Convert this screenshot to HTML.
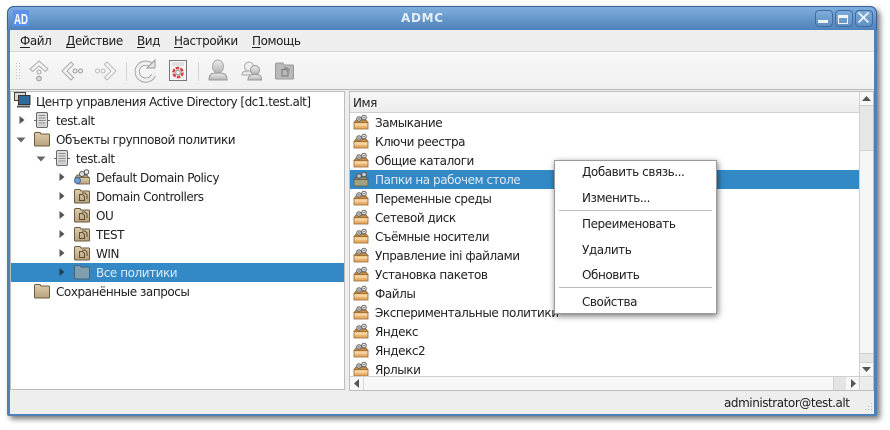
<!DOCTYPE html>
<html><head><meta charset="utf-8">
<style>
html,body{margin:0;padding:0;width:890px;height:430px;overflow:hidden;background:#fff}
body{position:relative;font-family:"DejaVu Sans","Liberation Sans",sans-serif;font-size:12px;color:#202020}
.a{position:absolute}
.t{position:absolute;white-space:nowrap;line-height:16px;height:16px;letter-spacing:-.45px;margin-top:1px}
.w{color:#dfeaf5}
u{text-underline-offset:2px}
svg{position:absolute;overflow:visible}
</style></head><body>
<svg width="0" height="0" style="position:absolute">
<defs>
<linearGradient id="tanG" x1="0" y1="0" x2="0" y2="1"><stop offset="0" stop-color="#dccdae"/><stop offset="1" stop-color="#b8a27c"/></linearGradient>
<linearGradient id="boxG" x1="0" y1="0" x2="0" y2="1"><stop offset="0" stop-color="#f6cf94"/><stop offset="1" stop-color="#e2a25a"/></linearGradient>
<linearGradient id="gr" x1="0" y1="0" x2="0" y2="1"><stop offset="0" stop-color="#ececec"/><stop offset="1" stop-color="#b4b4b4"/></linearGradient>
<symbol id="folder" viewBox="0 0 16 16"><path d="M.5 3.500V14a1 1 0 0 0 1 1h13a1 1 0 0 0 1-1V4a1 1 0 0 0-1-1H7L6 1.500H2A1.500 1.500 0 0 0 .5 3.500z" fill="url(#tanG)" stroke="#6b5a3c"/></symbol>
<symbol id="gfolder" viewBox="0 0 16 16"><path d="M.5 3.500V14a1 1 0 0 0 1 1h13a1 1 0 0 0 1-1V4a1 1 0 0 0-1-1H7L6 1.500H2A1.500 1.500 0 0 0 .5 3.500z" fill="url(#tanG)" stroke="#6b5a3c"/><path d="M5.500 6.500h3l2 2v4h-5zM8 5h3l2 2v4" fill="none" stroke="#5b4c34"/></symbol>
<symbol id="box" viewBox="0 0 16 16"><path d="M1 8.500 3 6h10l2 2.500z" fill="#c98d45" stroke="#8a5f2b" stroke-width=".8"/><rect x="1" y="8.500" width="14" height="6.500" fill="url(#boxG)" stroke="#9a6a30" stroke-width=".8"/><path d="M1.500 11h13" stroke="#fbe3bb"/><circle cx="6" cy="5" r="2.300" fill="#d4d4d4" stroke="#666"/><circle cx="11" cy="3.500" r="2.300" fill="#eee" stroke="#666"/><circle cx="6" cy="5" r=".8" fill="#666"/><circle cx="11" cy="3.500" r=".8" fill="#666"/></symbol>
<symbol id="server" viewBox="0 0 16 16"><path d="M0 8.500h3M13 8.500h3" stroke="#666"/><rect x="2.500" y=".5" width="11" height="15" rx="1.500" fill="#dedede" stroke="#666"/><path d="M4.500 3.500h7M4.500 6h7M4.500 8.500h7M4.500 11h7" stroke="#8a8a8a"/><path d="M4.500 13.300h7" stroke="#999" stroke-dasharray="1 1"/></symbol>
<symbol id="policy" viewBox="0 0 16 16"><path d="M1 9 3 6h10l2 3z" fill="#b9a27b" stroke="#66583e" stroke-width=".8"/><rect x="3" y="8.500" width="12.500" height="6.500" fill="url(#tanG)" stroke="#66583e" stroke-width=".8"/><circle cx="8" cy="5" r="2.500" fill="#ddd" stroke="#555"/><circle cx="12.500" cy="3" r="2.300" fill="#eee" stroke="#555"/><circle cx="3.500" cy="11.500" r="3" fill="#6f9fd0" stroke="#3f6b9e"/></symbol>
<symbol id="arrowR" viewBox="0 0 6 10"><path d="M.5 1 5.500 5 .5 9z" fill="#555"/></symbol>
<symbol id="arrowD" viewBox="0 0 10 8"><path d="M.5 1.500h9L5 6.500z" fill="#666"/></symbol>
</defs>
</svg>

<!-- shadow + frame -->
<div class="a" style="left:7px;top:6px;width:870px;height:410px;border-radius:7px 7px 2px 2px;box-shadow:3px 3px 6px rgba(0,0,0,.55);background:#4f80b8"></div>
<div class="a" style="left:7px;top:6px;width:870px;height:24px;border-radius:7px 7px 0 0;box-sizing:border-box;border:1px solid #3a639a;border-bottom:0;background:linear-gradient(#7eaedd,#4f82ba)"></div>
<div class="a" style="left:10px;top:30px;width:864px;height:384px;background:#eeeeee"></div>

<!-- title -->
<svg style="left:13px;top:10px" width="16" height="16"><rect width="16" height="16" fill="#5f90ec"/><text x="1" y="14" font-family="Liberation Sans" font-weight="bold" font-size="15" fill="#fff" textLength="14" lengthAdjust="spacingAndGlyphs">AD</text></svg>
<div class="t" style="left:401px;top:9px;font-weight:bold;color:#e6edf5;letter-spacing:.7px;font-size:12px">ADMC</div>
<div class="a" style="left:815px;top:10px;width:16px;height:15px;border:1px solid #3f6ca3;border-radius:4px;background:rgba(255,255,255,.06)"></div>
<div class="a" style="left:835px;top:10px;width:16px;height:15px;border:1px solid #3f6ca3;border-radius:4px;background:rgba(255,255,255,.06)"></div>
<div class="a" style="left:855px;top:10px;width:16px;height:15px;border:1px solid #3f6ca3;border-radius:4px;background:rgba(255,255,255,.06)"></div>
<div class="a" style="left:818px;top:20px;width:10px;height:3px;background:#f2f6fa"></div>
<div class="a" style="left:838px;top:15px;width:8px;height:5px;border:1px solid #f2f6fa;border-top:3px solid #f2f6fa"></div>
<svg style="left:858px;top:12px" width="11" height="11"><path d="M.5.5l10 10M10.500.5l-10 10" stroke="#eef3f8" stroke-width="1.800"/></svg>

<!-- menu -->
<div class="t" style="left:20px;top:32px"><u>Ф</u>айл</div>
<div class="t" style="left:66px;top:32px"><u>Д</u>ействие</div>
<div class="t" style="left:137px;top:32px"><u>В</u>ид</div>
<div class="t" style="left:174px;top:32px"><u>Н</u>астройки</div>
<div class="t" style="left:252px;top:32px"><u>П</u>омощь</div>
<div class="a" style="left:10px;top:51px;width:864px;height:1px;background:#d6d6d6"></div>

<!-- toolbar -->
<div class="a" style="left:10px;top:52px;width:864px;height:37px;background:linear-gradient(#f8f8f8,#f0f0f0)"></div>
<div class="a" style="left:10px;top:89px;width:864px;height:1px;background:#b8b8b8"></div>
<svg style="left:16px;top:63px" width="4" height="18"><path d="M.5 0v18M3.500 0v18" stroke="#c4c4c4" stroke-dasharray="1 2"/></svg>
<div class="a" style="left:126px;top:62px;width:1px;height:19px;background:#d4d4d4"></div>
<div class="a" style="left:198px;top:62px;width:1px;height:19px;background:#d4d4d4"></div>
<svg style="left:29px;top:60px" width="20" height="22"><path d="M10 1 19 9l-2.500 2.500L10 6 3.500 11.500 1 9z" fill="#f2f2f2" stroke="#aaa"/><circle cx="10" cy="12" r="2" fill="#eee" stroke="#aaa"/><circle cx="10" cy="18.500" r="2.300" fill="#ddd" stroke="#999"/></svg>
<svg style="left:61px;top:61px" width="22" height="20"><path d="M10 1 1 10l9 9 2.500-2.500L6 10l6.500-6.500z" fill="#f2f2f2" stroke="#aaa"/><circle cx="14" cy="10" r="2" fill="#eee" stroke="#999"/><circle cx="19.500" cy="10" r="2" fill="#eee" stroke="#999"/></svg>
<svg style="left:95px;top:61px" width="22" height="20"><path d="M12 1l9 9-9 9-2.500-2.500L16 10 9.500 3.500z" fill="#f6f6f6" stroke="#bbb"/><circle cx="8" cy="10" r="2" fill="#f4f4f4" stroke="#bbb"/><circle cx="2.500" cy="10" r="2" fill="#f4f4f4" stroke="#bbb"/></svg>
<svg style="left:135px;top:60px" width="21" height="22"><path d="M17 6A8.500 8.500 0 1 0 18.500 15" fill="none" stroke="#999" stroke-width="5"/><path d="M17 6A8.500 8.500 0 1 0 18.500 15" fill="none" stroke="#f0f0f0" stroke-width="3.400"/><path d="M12 8h8V0z" fill="#e4e4e4" stroke="#999"/></svg>
<svg style="left:169px;top:60px" width="18" height="21"><rect x=".5" y=".5" width="17" height="20" fill="#f4f4f4" stroke="#777"/><path d="M3 3h12M3 5h12" stroke="#ccc"/><circle cx="9" cy="12.500" r="4.500" fill="#fff" stroke="#d24545" stroke-width="2.600" stroke-dasharray="3.500 1.200"/><circle cx="9" cy="12.500" r="2.200" fill="none" stroke="#888"/></svg>
<svg style="left:208px;top:59px" width="20" height="22"><ellipse cx="10" cy="7.500" rx="5.500" ry="6.500" fill="url(#gr)" stroke="#aaa"/><path d="M1 21c0-7 4-7 9-7s9 0 9 7z" fill="url(#gr)" stroke="#999"/></svg>
<svg style="left:241px;top:61px" width="21" height="20"><circle cx="8" cy="5.500" r="4.500" fill="#eee" stroke="#aaa"/><path d="M1 14c0-4 3-4 7-4s5 1 5 4z" fill="#e8e8e8" stroke="#aaa"/><circle cx="14" cy="9" r="4.500" fill="url(#gr)" stroke="#999"/><path d="M7 19c0-5 3-5.500 7-5.500s6.500.5 6.500 5.500z" fill="url(#gr)" stroke="#999"/></svg>
<svg style="left:275px;top:62px" width="19" height="18"><path d="M.5 3v13a1 1 0 0 0 1 1h16a1 1 0 0 0 1-1V4a1 1 0 0 0-1-1H9L8 1H2A1.500 1.500 0 0 0 .5 3z" fill="#b9b9b9" stroke="#999"/><path d="M7 7.500h4l2 2V14H7zM9 6h3l2.500 2.500" fill="none" stroke="#777"/></svg>

<!-- left panel -->
<div class="a" style="left:10px;top:91px;width:335px;height:299px;background:#fff;box-sizing:border-box;border:1px solid #bdbdbd"></div>
<div class="a" style="left:11px;top:263px;width:333px;height:19px;background:#3289c6"></div>

<svg style="left:14px;top:92px" width="17" height="17" viewBox="0 0 17 17"><rect x=".5" y=".5" width="11" height="8" fill="#d8d8d8" stroke="#444"/><rect x="4.500" y="3.500" width="11.500" height="9" fill="#2f6c9c" stroke="#333"/><path d="M3 14.500h13" stroke="#555" stroke-width="2"/></svg>
<div class="t" style="left:36px;top:93px;letter-spacing:-.51px">Центр управления Active Directory [dc1.test.alt]</div>

<svg style="left:19px;top:115px" width="6" height="10"><use href="#arrowR"/></svg>
<svg style="left:34px;top:112px" width="16" height="16"><use href="#server"/></svg>
<div class="t" style="left:56px;top:112px">test.alt</div>

<svg style="left:16px;top:136px" width="10" height="8"><use href="#arrowD"/></svg>
<svg style="left:34px;top:131px" width="16" height="16"><use href="#folder"/></svg>
<div class="t" style="left:56px;top:131px">Объекты групповой политики</div>

<svg style="left:36px;top:155px" width="10" height="8"><use href="#arrowD"/></svg>
<svg style="left:54px;top:150px" width="16" height="16"><use href="#server"/></svg>
<div class="t" style="left:76px;top:150px">test.alt</div>

<svg style="left:59px;top:172px" width="6" height="10"><use href="#arrowR"/></svg>
<svg style="left:74px;top:169px" width="16" height="16"><use href="#policy"/></svg>
<div class="t" style="left:96px;top:169px">Default Domain Policy</div>

<svg style="left:59px;top:191px" width="6" height="10"><use href="#arrowR"/></svg>
<svg style="left:74px;top:188px" width="16" height="16"><use href="#gfolder"/></svg>
<div class="t" style="left:96px;top:188px">Domain Controllers</div>

<svg style="left:59px;top:210px" width="6" height="10"><use href="#arrowR"/></svg>
<svg style="left:74px;top:207px" width="16" height="16"><use href="#gfolder"/></svg>
<div class="t" style="left:96px;top:207px">OU</div>

<svg style="left:59px;top:229px" width="6" height="10"><use href="#arrowR"/></svg>
<svg style="left:74px;top:226px" width="16" height="16"><use href="#gfolder"/></svg>
<div class="t" style="left:96px;top:226px">TEST</div>

<svg style="left:59px;top:248px" width="6" height="10"><use href="#arrowR"/></svg>
<svg style="left:74px;top:245px" width="16" height="16"><use href="#gfolder"/></svg>
<div class="t" style="left:96px;top:245px">WIN</div>

<svg style="left:59px;top:267px" width="6" height="10"><path d="M.5 1l5 4-5 4z" fill="#1d3f5c"/></svg>
<svg style="left:74px;top:264px" width="16" height="16" viewBox="0 0 16 16"><path d="M.5 3.500V14a1 1 0 0 0 1 1h13a1 1 0 0 0 1-1V4a1 1 0 0 0-1-1H7L6 1.500H2A1.500 1.500 0 0 0 .5 3.500z" fill="#7f9eae" stroke="#4a6473"/></svg>
<div class="t w" style="left:96px;top:264px">Все политики</div>

<svg style="left:34px;top:283px" width="16" height="16"><use href="#folder"/></svg>
<div class="t" style="left:56px;top:283px">Сохранённые запросы</div>

<!-- right panel -->
<div class="a" style="left:349px;top:91px;width:525px;height:300px;background:#fff;box-sizing:border-box;border:1px solid #bdbdbd"></div>
<div class="a" style="left:350px;top:92px;width:509px;height:20px;background:linear-gradient(#f7f7f7,#ececec);border-bottom:1px solid #d0d0d0"></div>
<div class="t" style="left:353px;top:94px">Имя</div>
<div class="a" style="left:350px;top:170px;width:510px;height:19px;background:#3289c6"></div>

<svg style="left:353px;top:114px" width="16" height="16"><use href="#box"/></svg><div class="t" style="left:375px;top:114px">Замыкание</div>
<svg style="left:353px;top:133px" width="16" height="16"><use href="#box"/></svg><div class="t" style="left:375px;top:133px">Ключи реестра</div>
<svg style="left:353px;top:152px" width="16" height="16"><use href="#box"/></svg><div class="t" style="left:375px;top:152px">Общие каталоги</div>
<svg style="left:353px;top:171px" width="16" height="16" viewBox="0 0 16 16"><path d="M1 8.500 3 6h10l2 2.500z" fill="#8b8b6f" stroke="#555" stroke-width=".8"/><rect x="1" y="8.500" width="14" height="6.500" fill="#a3a27d" stroke="#5e5e48" stroke-width=".8"/><circle cx="6" cy="5" r="2.300" fill="#b8c4cc" stroke="#555"/><circle cx="11" cy="3.500" r="2.300" fill="#c8d2d8" stroke="#555"/></svg>
<div class="t w" style="left:375px;top:171px">Папки на рабочем столе</div>
<svg style="left:353px;top:190px" width="16" height="16"><use href="#box"/></svg><div class="t" style="left:375px;top:190px">Переменные среды</div>
<svg style="left:353px;top:209px" width="16" height="16"><use href="#box"/></svg><div class="t" style="left:375px;top:209px">Сетевой диск</div>
<svg style="left:353px;top:228px" width="16" height="16"><use href="#box"/></svg><div class="t" style="left:375px;top:228px">Съёмные носители</div>
<svg style="left:353px;top:247px" width="16" height="16"><use href="#box"/></svg><div class="t" style="left:375px;top:247px">Управление ini файлами</div>
<svg style="left:353px;top:266px" width="16" height="16"><use href="#box"/></svg><div class="t" style="left:375px;top:266px">Установка пакетов</div>
<svg style="left:353px;top:285px" width="16" height="16"><use href="#box"/></svg><div class="t" style="left:375px;top:285px">Файлы</div>
<svg style="left:353px;top:304px" width="16" height="16"><use href="#box"/></svg><div class="t" style="left:375px;top:304px">Экспериментальные политики</div>
<svg style="left:353px;top:323px" width="16" height="16"><use href="#box"/></svg><div class="t" style="left:375px;top:323px">Яндекс</div>
<svg style="left:353px;top:342px" width="16" height="16"><use href="#box"/></svg><div class="t" style="left:375px;top:342px">Яндекс2</div>
<div class="a" style="left:353px;top:361px;width:16px;height:15px;overflow:hidden"><svg style="left:0;top:0" width="16" height="16"><use href="#box"/></svg></div><div class="t" style="left:375px;top:361px;height:14px;overflow:hidden">Ярлыки</div>

<!-- v scrollbar -->
<div class="a" style="left:859px;top:92px;width:14px;height:284px;background:#e6e6e6;border-left:1px solid #d0d0d0;box-sizing:border-box"></div>
<div class="a" style="left:860px;top:92px;width:13px;height:14px;background:#f8f8f8;border-bottom:1px solid #d0d0d0;box-sizing:border-box"></div>
<svg style="left:862px;top:96px" width="9" height="5"><path d="M4.500 0 9 5H0z" fill="#555"/></svg>
<div class="a" style="left:860px;top:150px;width:13px;height:204px;background:#f6f6f6;border-top:1px solid #d4d4d4;border-bottom:1px solid #d0d0d0;box-sizing:border-box"></div>
<div class="a" style="left:860px;top:362px;width:13px;height:14px;background:#f8f8f8;border-top:1px solid #d0d0d0;box-sizing:border-box"></div>
<svg style="left:862px;top:367px" width="9" height="5"><path d="M0 0h9L4.500 5z" fill="#555"/></svg>

<!-- h scrollbar -->
<div class="a" style="left:350px;top:376px;width:523px;height:14px;background:#f7f7f7;border-top:1px solid #d0d0d0;box-sizing:border-box"></div>
<div class="a" style="left:363px;top:377px;width:1px;height:13px;background:#d8d8d8"></div>
<svg style="left:354px;top:379px" width="5" height="9"><path d="M5 0v9L0 4.500z" fill="#555"/></svg>
<div class="a" style="left:833px;top:377px;width:13px;height:13px;background:#e4e4e4;border-left:1px solid #d0d0d0;box-sizing:border-box"></div>
<svg style="left:851px;top:379px" width="5" height="9"><path d="M0 0v9l5-4.500z" fill="#555"/></svg>
<div class="a" style="left:859px;top:377px;width:14px;height:13px;background:#ececec;border-left:1px solid #d0d0d0;box-sizing:border-box"></div>

<!-- status -->
<div class="t" style="left:724px;top:394px">administrator@test.alt</div>
<svg style="left:862px;top:402px" width="10" height="10"><path d="M9.500 1v9M6.500 4v6M3.500 7v3" stroke="#bbb" stroke-dasharray="1 2"/></svg>

<!-- context menu -->
<div class="a" style="left:554px;top:160px;width:163px;height:154px;box-sizing:border-box;background:#fff;border:1px solid #9a9a9a;box-shadow:1px 2px 6px rgba(0,0,0,.55)"></div>
<div class="a" style="left:559px;top:210px;width:153px;height:1px;background:#bdbdbd"></div>
<div class="a" style="left:559px;top:287px;width:153px;height:1px;background:#bdbdbd"></div>
<div class="t" style="left:582px;top:163px">Добавить связь...</div>
<div class="t" style="left:582px;top:189px">Изменить...</div>
<div class="t" style="left:582px;top:215px">Переименовать</div>
<div class="t" style="left:582px;top:241px">Удалить</div>
<div class="t" style="left:582px;top:266px">Обновить</div>
<div class="t" style="left:582px;top:293px">Свойства</div>
</body></html>
